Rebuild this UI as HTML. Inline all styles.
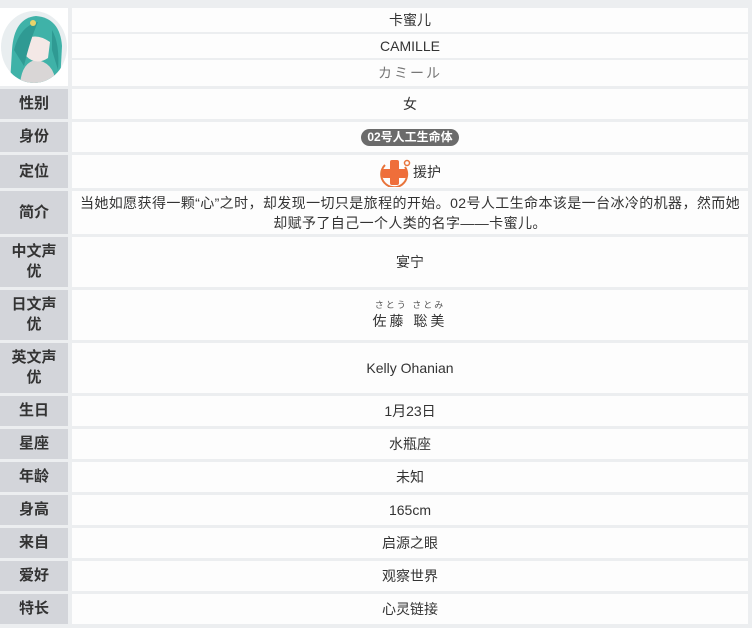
<!DOCTYPE html>
<html><head><meta charset="utf-8">
<style>
html,body{margin:0;padding:0}
body{width:752px;height:628px;background:#eceef0;position:relative;overflow:hidden;font-family:"Liberation Sans","Noto Sans CJK SC",sans-serif;color:#333}
.l{position:absolute;left:0;width:68px;background:#d3d5da;font-weight:bold;font-size:15px;color:#333;display:flex;align-items:center;justify-content:center;text-align:center;line-height:20px}
.v{position:absolute;left:72px;width:676px;background:#fdfdfd;font-size:14px;color:#333;display:flex;align-items:center;justify-content:center;text-align:center;line-height:20px}
.pill{background:#6b6b6b;color:#fff;font-weight:bold;font-size:12px;border-radius:9px;padding:0 6px;line-height:17px}
</style></head><body>
<div style="position:absolute;left:0;top:8px;width:68px;height:78px;background:#fff"></div>
<svg style="position:absolute;left:0;top:10px" width="68" height="74" viewBox="0 0 68 74">
<defs><clipPath id="c"><ellipse cx="34" cy="37" rx="33" ry="36"/></clipPath></defs>
<g clip-path="url(#c)">
<rect width="68" height="74" fill="#e9eef0"/>
<path d="M10 74 L12 40 Q14 8 36 6 Q60 8 62 36 L60 74 Z" fill="#3fb2a8"/>
<path d="M20 74 Q22 52 36 50 Q54 52 56 74 Z" fill="#d9d6d6"/>
<path d="M24 30 Q36 22 50 32 L48 48 Q36 56 26 46 Z" fill="#f4e8e6"/>
<path d="M14 40 Q20 16 38 12 Q30 30 24 56 Z" fill="#2f9a93"/>
<path d="M52 20 Q60 34 58 60 L52 40 Z" fill="#2f9a93"/>
<circle cx="33" cy="13" r="3" fill="#e8d36a"/>
</g></svg>
<div class="v" style="top:8px;height:24px">卡蜜儿</div>
<div class="v" style="top:34px;height:24px">CAMILLE</div>
<div class="v" style="top:60px;height:26px;color:#777;letter-spacing:2px">カミール</div>

<div class="l" style="top:89px;height:30px">性别</div><div class="v" style="top:89px;height:30px">女</div>
<div class="l" style="top:122px;height:30px">身份</div><div class="v" style="top:122px;height:30px"><span class="pill">02号人工生命体</span></div>
<div class="l" style="top:155px;height:33px">定位</div><div class="v" style="top:155px;height:33px">
<svg width="32" height="30" viewBox="0 0 32 30" style="margin-right:2px"><path d="M6 8 A13 13 0 1 0 26 10" fill="none" stroke="#e8743b" stroke-width="2"/><rect x="11" y="3" width="9" height="25" rx="2" fill="#ef6e3a"/><rect x="3" y="12" width="25" height="9" rx="2" fill="#ef6e3a"/><circle cx="28" cy="6" r="2.5" fill="none" stroke="#e8743b" stroke-width="1.5"/></svg>援护</div>
<div class="l" style="top:191px;height:43px">简介</div><div class="v" style="top:191px;height:43px;letter-spacing:0.4px">当她如愿获得一颗“心”之时，却发现一切只是旅程的开始。02号人工生命本该是一台冰冷的机器，然而她<br>却赋予了自己一个人类的名字——卡蜜儿。</div>
<div class="l" style="top:237px;height:50px">中文声<br>优</div><div class="v" style="top:237px;height:50px">宴宁</div>
<div class="l" style="top:290px;height:50px">日文声<br>优</div><div class="v" style="top:290px;height:50px;flex-direction:column"><span style="font-size:9px;line-height:12px;letter-spacing:2px;color:#555">さとう さとみ</span><span style="letter-spacing:3px">佐藤 聡美</span></div>
<div class="l" style="top:343px;height:50px">英文声<br>优</div><div class="v" style="top:343px;height:50px">Kelly Ohanian</div>
<div class="l" style="top:396px;height:30px">生日</div><div class="v" style="top:396px;height:30px">1月23日</div>
<div class="l" style="top:429px;height:30px">星座</div><div class="v" style="top:429px;height:30px">水瓶座</div>
<div class="l" style="top:462px;height:30px">年龄</div><div class="v" style="top:462px;height:30px">未知</div>
<div class="l" style="top:495px;height:30px">身高</div><div class="v" style="top:495px;height:30px">165cm</div>
<div class="l" style="top:528px;height:30px">来自</div><div class="v" style="top:528px;height:30px">启源之眼</div>
<div class="l" style="top:561px;height:30px">爱好</div><div class="v" style="top:561px;height:30px">观察世界</div>
<div class="l" style="top:594px;height:30px">特长</div><div class="v" style="top:594px;height:30px">心灵链接</div>
</body></html>
